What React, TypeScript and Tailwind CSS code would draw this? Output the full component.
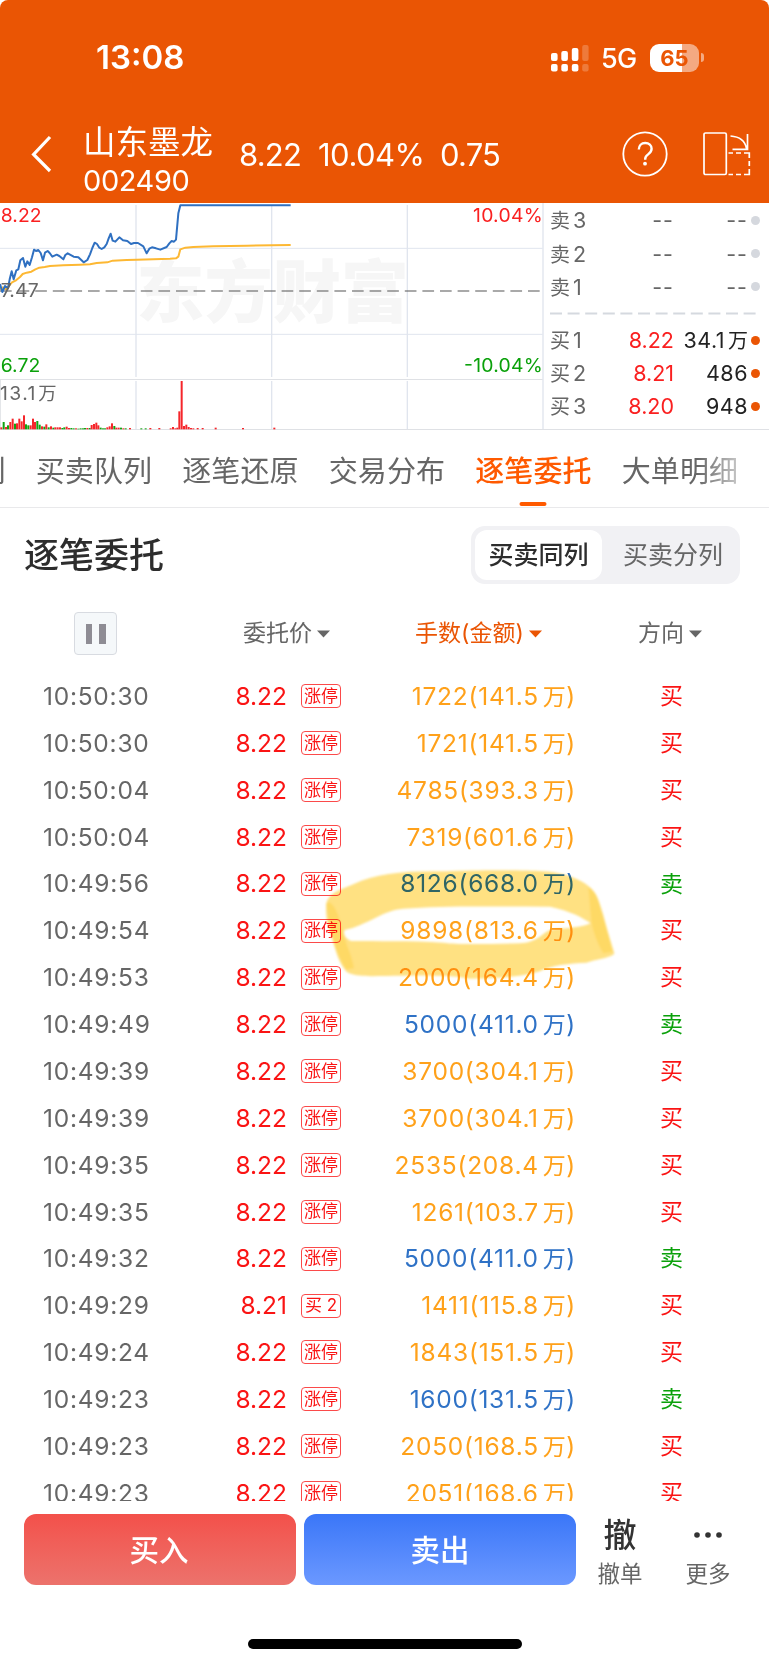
import clsx from "clsx";

type Row = { time: string; price: string; tag: string; qty: string; side: "买" | "卖" };

const rows: Row[] = [
    { time: "10:50:30", price: "8.22", tag: "涨停", qty: "1722(141.5", side: "买" },
    { time: "10:50:30", price: "8.22", tag: "涨停", qty: "1721(141.5", side: "买" },
    { time: "10:50:04", price: "8.22", tag: "涨停", qty: "4785(393.3", side: "买" },
    { time: "10:50:04", price: "8.22", tag: "涨停", qty: "7319(601.6", side: "买" },
    { time: "10:49:56", price: "8.22", tag: "涨停", qty: "8126(668.0", side: "卖" },
    { time: "10:49:54", price: "8.22", tag: "涨停", qty: "9898(813.6", side: "买" },
    { time: "10:49:53", price: "8.22", tag: "涨停", qty: "2000(164.4", side: "买" },
    { time: "10:49:49", price: "8.22", tag: "涨停", qty: "5000(411.0", side: "卖" },
    { time: "10:49:39", price: "8.22", tag: "涨停", qty: "3700(304.1", side: "买" },
    { time: "10:49:39", price: "8.22", tag: "涨停", qty: "3700(304.1", side: "买" },
    { time: "10:49:35", price: "8.22", tag: "涨停", qty: "2535(208.4", side: "买" },
    { time: "10:49:35", price: "8.22", tag: "涨停", qty: "1261(103.7", side: "买" },
    { time: "10:49:32", price: "8.22", tag: "涨停", qty: "5000(411.0", side: "卖" },
    { time: "10:49:29", price: "8.21", tag: "买 2", qty: "1411(115.8", side: "买" },
    { time: "10:49:24", price: "8.22", tag: "涨停", qty: "1843(151.5", side: "买" },
    { time: "10:49:23", price: "8.22", tag: "涨停", qty: "1600(131.5", side: "卖" },
    { time: "10:49:23", price: "8.22", tag: "涨停", qty: "2050(168.5", side: "买" },
    { time: "10:49:23", price: "8.22", tag: "涨停", qty: "2051(168.6", side: "买" },
];

const tabs = ["卖列", "买卖队列", "逐笔还原", "交易分布", "逐笔委托", "大单明细"];

const asks = ["3", "2", "1"];
const bids = [
    { level: "1", price: "8.22", volume: "34.1", unit: "万" },
    { level: "2", price: "8.21", volume: "486", unit: "" },
    { level: "3", price: "8.20", volume: "948", unit: "" },
];

// [x, height, up?] in chart units
const volumes: [number, number, boolean][] = [
    [1, 6, true], [8, 22, false], [15, 7, true], [21, 12, false], [28, 22, true], [35, 32, true],
    [42, 17, false], [48, 18, true], [55, 32, true], [62, 24, true], [69, 42, true], [75, 15, false],
    [82, 12, false], [89, 12, true], [96, 32, true], [102, 22, true], [109, 25, false], [116, 14, false],
    [123, 9, true], [130, 8, false], [136, 15, true], [143, 6, false], [150, 9, true], [157, 5, false],
    [163, 6, true], [170, 6, true], [177, 6, true], [184, 4, false], [190, 6, false], [197, 8, true],
    [204, 4, true], [211, 4, false], [218, 3, false], [225, 3, true], [232, 2, false], [239, 3, false],
    [246, 3, false], [252, 4, false], [259, 4, true], [266, 4, false], [272, 13, true], [279, 16, true],
    [286, 20, true], [292, 12, true], [299, 5, false], [306, 3, false], [312, 3, false], [319, 6, true],
    [326, 9, true], [333, 18, true], [340, 10, false], [346, 5, true], [353, 5, true], [360, 5, false],
    [367, 3, true], [374, 3, false], [387, 4, true], [421, 3, false], [434, 3, false], [448, 4, true],
    [475, 4, true], [509, 3, true], [516, 7, true], [523, 3, true], [529, 5, true], [535, 54, true],
    [542, 145, true], [549, 10, true], [556, 14, true], [563, 7, true], [570, 4, true], [577, 3, true],
    [590, 4, true], [605, 4, true], [644, 5, true], [726, 4, true], [820, 5, true],
];

function StatusBar() {
    return (
        <div className="flex h-[115px] items-center justify-between pr-[65px] pl-[96px] text-white">
            <span className="text-[33px] leading-none font-semibold">13:08</span>
            <div className="flex items-center">
                <svg width="39" height="28" viewBox="0 0 39 28" fill="currentColor">
                    <rect x="0" y="9" width="6.6" height="8" rx="2" />
                    <rect x="10.3" y="7" width="6.6" height="10" rx="2" />
                    <rect x="20.8" y="4" width="6.6" height="13" rx="2" />
                    <rect x="31.2" y="1" width="6.4" height="16" rx="2" opacity=".22" />
                    <rect x="0" y="20" width="6.6" height="7.5" rx="2" />
                    <rect x="10.3" y="20" width="6.6" height="7.5" rx="2" />
                    <rect x="20.8" y="20" width="6.6" height="7.5" rx="2" />
                    <rect x="31.2" y="20" width="6.4" height="7.5" rx="2" opacity=".22" />
                </svg>
                <span className="ml-[11px] w-[37px] pt-[2px] text-[27px] leading-none font-medium tracking-[-0.8px]">5G</span>
                <div className="ml-[12px] flex h-[28px] w-[49px] items-center justify-center rounded-[9px] bg-linear-to-r from-white from-66% to-[#f4a982] to-66% text-[22px] leading-none font-bold text-[#ea5504]">
                    65
                </div>
                <div className="ml-[2px] h-[9px] w-[3px] rounded-r-full bg-[#f4a982]" />
            </div>
        </div>
    );
}

function Header() {
    return (
        <header className="h-[203px] rounded-t-[8px] bg-[#ea5504]">
            <StatusBar />
            <div className="flex h-[88px] text-white">
                <svg className="mt-[20px] ml-[31px]" width="21" height="38" viewBox="0 0 21 38" fill="none" stroke="currentColor" strokeWidth="3.2">
                    <path d="M19 2 2.6 19.5 19 36" />
                </svg>
                <div className="mt-[9px] ml-[31px] w-[156px]">
                    <div className="pt-px text-[32.5px] leading-[36px]">山东墨龙</div>
                    <div className="mt-[2px] text-[29px] leading-[36px] tracking-[-0.4px]">002490</div>
                </div>
                <div className="mt-[22px] flex text-[31px] leading-[36px]">
                    <span className="w-[79px] tracking-[-0.8px]">8.22</span>
                    <span className="w-[122px] tracking-[-0.5px]">10.04%</span>
                    <span className="w-[182px] tracking-[-0.8px]">0.75</span>
                </div>
                <svg className="mt-[16px]" width="46" height="46" viewBox="0 0 46 46" fill="none" stroke="currentColor" strokeWidth="1.8">
                    <circle cx="23" cy="23" r="21.7" />
                    <path d="M16.8 18.6c0-4 2.6-6.6 6.4-6.6s6.4 2.5 6.4 5.8c0 2.6-1.3 4-3.5 5.6-2 1.4-2.9 2.5-2.9 4.5v.9" strokeWidth="2.4" />
                    <circle cx="23" cy="32.7" r="1.9" fill="currentColor" stroke="none" />
                </svg>
                <svg className="mt-[16px] ml-[34px]" width="50" height="46" viewBox="0 0 50 46" fill="none" stroke="currentColor" strokeWidth="1.7">
                    <rect x="2" y="2" width="22.3" height="41.5" rx="1.5" />
                    <path d="M28.5 5c9 .6 14.6 5 16 12.5M45.5 3v15.3h-15" />
                    <path d="M26.5 22H31M34 22h5M42 22h5.3v5M47.3 30v5M47.3 38v5.5H42M39 43.5h-5M31 43.5h-4.5" />
                </svg>
            </div>
        </header>
    );
}

function MinuteChart() {
    return (
        <svg className="shrink-0" width="546" height="227" viewBox="0 9 1638 681">
            <text x="409" y="350" textLength="818" lengthAdjust="spacingAndGlyphs" className="fill-[#f6f6f6] text-[206px] font-black">
                东方财富
            </text>
            <g stroke="#e0e5ee" strokeWidth="4">
                <path d="M0 145H1628M0 403H1628" strokeWidth="3" />
                <path d="M408 15V531M408 543V688M815 15V531M815 543V688M1222 15V531M1222 543V688M1629 9V688" />
                <path d="M0 538.5H1628M0 688.5H1638M1 538V688" stroke="#dfe1e5" strokeWidth="3" />
            </g>
            <path d="M0 273H1620" stroke="#555" strokeWidth="3.5" strokeDasharray="35 17.8" />
            {volumes.map(([x, h, up]) => (
                <rect key={x} x={x} y={688 - h} width="6" height={h} fill={up ? "#f5262b" : "#12a312"} />
            ))}
            <g fill="none" strokeWidth="6" strokeLinejoin="round">
                <path
                    stroke="#fdb833"
                    d="M0 268 8 262 18 268 26 258 36 247 48 241 60 231 68 222 80 218 94 215 106 208 118 203 134 201 150 198 190 196 240 194.5 270 193 290 189 322 187 338 182 380 180 410 179 460 177.5 510 176.5 528 175 535 170 541 148 556 143 580 141 640 139 740 137 872 135"
                />
                <path
                    stroke="#2f70c1"
                    d="M0 252 7 276 15 258 24 265 29 238 35 214 41 238 49 211 55 208 61 181 69 174 76 200 82 184 89 195 96 172 102 149 108 153 115 150 122 159 129 181 135 158 143 153 149 159 157 170 170 164 178 168 190 178 196 165 203 160 221 170 235 172 251 187 262 180 270 163 277 144 284 128 291 132 298 143 305 147 313 142 320 132 326 115 332 101 338 122 346 125 358 112 369 121 382 123 393 132 402 129 414 129 430 139 440 160 448 146 456 142 468 145 481 149 500 141 508 130 515 123 522 125 528 119 535 40 541 16 872 16"
                />
            </g>
            <g className="text-[58px]">
                <text x="2" y="67" textLength="123" fill="#fa2020">8.22</text>
                <text x="2" y="292" textLength="114" fill="#666">7.47</text>
                <text x="2" y="516" textLength="119" fill="#0ba10b">6.72</text>
                <text x="0" y="601" textLength="106" fill="#666">13.1</text>
                <text x="115" y="601" className="text-[55px]" fill="#666">万</text>
                <text x="1419" y="67" textLength="209" fill="#fa2020">10.04%</text>
                <text x="1392" y="516" textLength="236" fill="#0ba10b">-10.04%</text>
            </g>
        </svg>
    );
}

function OrderBook() {
    return (
        <div className="flex flex-1 flex-col border-b border-[#dfe1e5] pr-[9px] pl-[4px] text-[21.5px] text-[#666]">
            {asks.map((level) => (
                <div key={level} className="flex h-[33.2px] items-center first:mt-px">
                    <span className="w-[50px] whitespace-nowrap"><span className="mr-[3px] text-[20px]">卖</span>{level}</span>
                    <span className="w-[74px] text-right tracking-[1px]">--</span>
                    <span className="w-[74px] text-right tracking-[1px]">--</span>
                    <i className="ml-[3px] size-[9px] rounded-full bg-[#d5d8de]" />
                </div>
            ))}
            <svg className="mt-[8px] mb-[9px]" width="208" height="3">
                <path d="M0 1.5H206" stroke="#d5d9df" strokeWidth="2" strokeDasharray="12 5.6" />
            </svg>
            {bids.map(({ level, price, volume, unit }) => (
                <div key={level} className="flex h-[33.2px] items-center">
                    <span className="w-[50px] whitespace-nowrap"><span className="mr-[3px] text-[20px]">买</span>{level}</span>
                    <span className="w-[74px] text-right text-[#fa2020]">{price}</span>
                    <span className="ml-[-6px] w-[80px] text-right tracking-[0.5px] whitespace-nowrap text-[#222]">
                        {volume}
                        {unit && <span className="ml-[3px] text-[20px] tracking-normal">{unit}</span>}
                    </span>
                    <i className="ml-[3px] size-[9px] rounded-full bg-[#ea5504]" />
                </div>
            ))}
        </div>
    );
}

function Tabs() {
    return (
        <nav className="relative h-[78px] overflow-hidden border-b border-[#e9e9eb]">
            <div className="ml-[-52.5px] flex h-[78px] gap-[30px] pt-[3px] text-[29px] leading-[78px] tracking-[0.12px] whitespace-nowrap text-[#666]">
                {tabs.map((tab) => (
                    <div key={tab} className={clsx("relative shrink-0", tab === "逐笔委托" && "font-medium text-[#ff5a00]")}>
                        {tab}
                        {tab === "逐笔委托" && (
                            <i className="absolute bottom-[2px] left-1/2 h-[4px] w-[27px] -translate-x-1/2 rounded-full bg-[#ff5a00]" />
                        )}
                    </div>
                ))}
            </div>
            <div className="absolute top-0 right-0 h-[76px] w-[72px] bg-linear-to-r from-transparent to-white to-90%" />
        </nav>
    );
}

function Caret() {
    return (
        <svg className="ml-[5px]" width="13" height="8" viewBox="0 0 13 8" fill="currentColor">
            <path d="M0 .5h13L6.5 7.5z" />
        </svg>
    );
}

function Highlight() {
    return (
        <svg className="pointer-events-none absolute top-[167px] left-[310px] mix-blend-multiply" width="330" height="170" viewBox="0 0 990 510">
            <defs>
                <filter id="soft"><feGaussianBlur stdDeviation="3" /></filter>
            </defs>
            <g filter="url(#soft)">
                <path
                    fill="#ffe182"
                    fillRule="evenodd"
                    d="M48 205C46 160 90 150 130 133C200 98 290 92 410 94C500 90 640 90 700 94C770 96 850 130 863 176L913 340C910 352 860 358 830 368C780 370 720 376 690 394C640 410 560 416 480 416C400 402 300 408 230 408C180 408 130 412 108 394C80 360 72 310 62 280C50 250 48 225 48 205ZM104 270C170 256 220 210 280 206C400 196 560 200 720 200C780 212 820 234 842 250C800 268 750 262 715 272C690 286 680 306 630 310C520 312 440 314 400 308C300 302 200 304 125 303C106 298 98 280 104 270Z"
                />
                <path fill="#fdd658" opacity=".7" d="M50 190C60 180 80 200 92 250C100 300 125 340 132 385L108 388C85 350 70 305 60 270Z" />
                <path fill="#fdd658" opacity=".7" d="M835 140C860 155 868 185 880 225L908 335L880 340C862 310 848 270 844 245Z" />
            </g>
        </svg>
    );
}

function OrderList() {
    return (
        <section className="relative h-[828px] overflow-hidden">
            {rows.map((row, i) => (
                <div key={i} className="flex h-[46.87px] items-center text-[24.5px] whitespace-nowrap">
                    <span className="ml-[43px] w-[191px] tracking-[0.75px] text-[#666]">{row.time}</span>
                    <span className="w-[53px] text-right text-[#fa1414]">{row.price}</span>
                    <span className="ml-[14px] flex h-[24px] w-[40px] items-center justify-center rounded-[4px] border border-[#fb4a4a] text-[17px] leading-none text-[#fa1414]">
                        {row.tag}
                    </span>
                    <span className={clsx("w-[235px] text-right tracking-[0.75px]", row.side === "买" ? "text-[#ffa11a]" : "text-[#2f72c6]")}>
                        {row.qty}
                        <span className="ml-[4px] text-[23px] tracking-[0.5px]">万</span>)
                    </span>
                    <span className={clsx("ml-[84px] text-[23px]", row.side === "买" ? "text-[#fa1414]" : "text-[#0ba10b]")}>
                        {row.side}
                    </span>
                </div>
            ))}
            <Highlight />
        </section>
    );
}

function BottomBar() {
    return (
        <footer className="flex h-[164px] pt-[13px] pl-[24px]">
            <button className="h-[71px] w-[272px] rounded-[12px] bg-linear-to-b from-[#f3504a] to-[#ec726c] pt-px pr-[2px] text-[29.5px] font-medium text-white">
                买入
            </button>
            <button className="ml-[8px] h-[71px] w-[272px] rounded-[12px] bg-linear-to-b from-[#3a76f8] to-[#6b98ff] pt-px text-[29.5px] font-medium text-white">
                卖出
            </button>
            <div className="ml-[10px] flex w-[68px] flex-col items-center text-[#666]">
                <span className="text-[33px] leading-[42px] font-medium text-[#333]">撤</span>
                <span className="mt-[2px] text-[22.5px] leading-[32px]">撤单</span>
            </div>
            <div className="ml-[20px] flex w-[68px] flex-col items-center text-[#666]">
                <svg width="30" height="42" viewBox="0 0 30 42" fill="#333">
                    <circle cx="4" cy="21" r="2.8" />
                    <circle cx="15" cy="21" r="2.8" />
                    <circle cx="26" cy="21" r="2.8" />
                </svg>
                <span className="mt-[2px] text-[22.5px] leading-[32px]">更多</span>
            </div>
        </footer>
    );
}

export default function App() {
    return (
        <main className="relative h-[1665px] w-[769px] overflow-hidden bg-white font-['Inter','Noto_Sans_CJK_SC',sans-serif]">
            <Header />
            <div className="flex h-[227px]">
                <MinuteChart />
                <OrderBook />
            </div>
            <Tabs />
            <div className="flex h-[94px] items-center justify-between pr-[29px] pl-[24px]">
                <h1 className="pt-px text-[35px] leading-none font-medium text-[#2d2d2d]">逐笔委托</h1>
                <div className="flex h-[58px] w-[269px] rounded-[14px] bg-[#f1f1f4] p-[4px] text-[25px] leading-[50px]">
                    <div className="w-[127px] rounded-[12px] bg-white text-center font-medium text-[#2d2d2d]">买卖同列</div>
                    <div className="flex-1 pl-[8px] text-center text-[#666]">买卖分列</div>
                </div>
            </div>
            <div className="flex h-[71px] items-center pb-[8px] text-[23px] text-[#666]">
                <button className="ml-[74px] flex size-[43px] items-center justify-center gap-[7px] rounded-[4px] border border-[#d8dbe1] bg-[#f5f8fa]">
                    <i className="h-[20px] w-[6.5px] bg-[#8e8c94]" />
                    <i className="h-[20px] w-[6.5px] bg-[#8e8c94]" />
                </button>
                <span className="ml-[126px] flex w-[172px] items-center">委托价<Caret /></span>
                <span className="flex w-[223px] items-center text-[#ea5504]">手数(金额)<Caret /></span>
                <span className="flex items-center">方向<Caret /></span>
            </div>
            <OrderList />
            <BottomBar />
            <div className="absolute bottom-[16px] left-1/2 h-[10px] w-[274px] -translate-x-1/2 rounded-full bg-black" />
        </main>
    );
}
